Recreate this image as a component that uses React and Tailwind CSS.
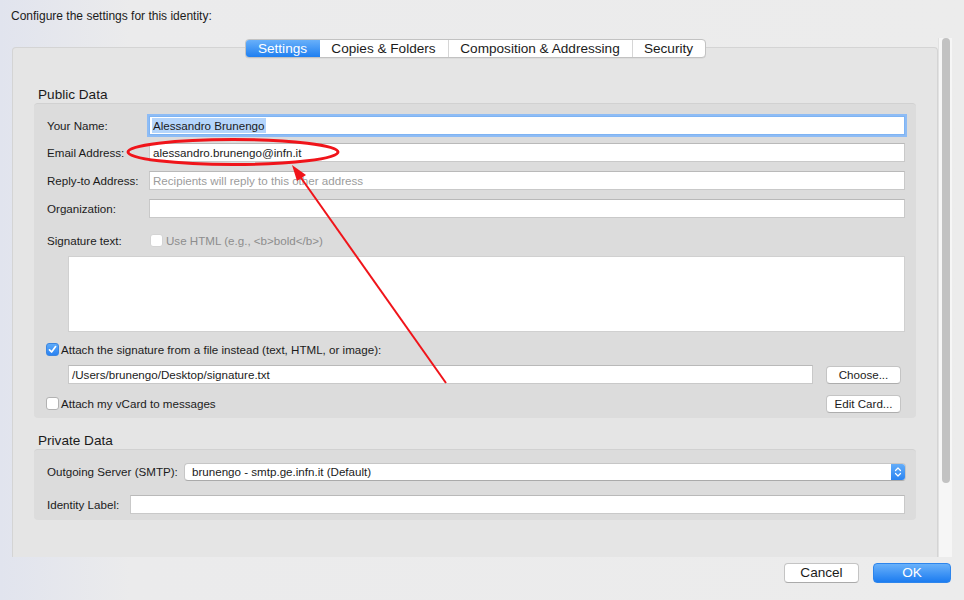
import React from "react";

function Input({ className = "", children, placeholder }) {
  return (
    <div
      className={
        "h-[19px] bg-white border border-[#c9c9c9] border-t-[#b9b9b9] flex items-center pl-[3px] text-[11.6px] leading-[13px] whitespace-nowrap overflow-hidden " +
        className
      }
    >
      {children}
      {placeholder && <span className="text-[#9c9c9c]">{placeholder}</span>}
    </div>
  );
}

function Checkbox({ checked, disabled }) {
  if (checked) {
    return (
      <div className="w-[13px] h-[13px] rounded-[3px] bg-[linear-gradient(#5eaaf8,#2a83f2)] border border-[#3c86e0] flex items-center justify-center shrink-0">
        <svg width="9" height="9" viewBox="0 0 9 9">
          <path d="M1.5 4.8 L3.6 7 L7.6 1.6" fill="none" stroke="white" strokeWidth="1.7" strokeLinecap="round" strokeLinejoin="round" />
        </svg>
      </div>
    );
  }
  return (
    <div
      className={
        "w-[13px] h-[13px] rounded-[3px] bg-white border shrink-0 " +
        (disabled ? "border-[#d4d4d4] bg-[#f4f4f4]" : "border-[#b2b2b2]")
      }
    />
  );
}

function Button({ children, className = "" }) {
  return (
    <div
      className={
        "bg-white border border-[#c4c4c4] border-b-[#adadad] rounded-[4px] flex items-center justify-center text-[11.6px] " +
        className
      }
    >
      {children}
    </div>
  );
}

export default function App() {
  return (
    <div className="relative w-[964px] h-[600px] overflow-hidden bg-[linear-gradient(to_right,#e1e4ee,#ebebec_130px,#ececec)] text-[#1b1b1b] font-['Liberation_Sans',Arial,sans-serif]">
      <div className="h-[38px] pl-[11px] pt-[9px] text-[12px] leading-[14px]">
        Configure the settings for this identity:
      </div>

      <div className="flex h-[519px]">
        <div className="ml-[12px] w-[926px] flex flex-col">
          {/* tabs */}
          <div className="relative z-10 mt-[1px] -mb-[11px] flex justify-center">
            <div className="flex h-[19px] rounded-[4px] border border-[#c2c2c2] bg-white text-[13.6px] leading-[17px] overflow-hidden shadow-[0_0.5px_0.5px_rgba(0,0,0,0.08)]">
              <div className="w-[74px] flex items-center justify-center bg-[linear-gradient(#68b0fa,#1f7ff0)] text-white">Settings</div>
              <div className="w-[128px] flex items-center justify-center">Copies &amp; Folders</div>
              <div className="w-[184px] flex items-center justify-center border-l border-[#d6d6d6]">Composition &amp; Addressing</div>
              <div className="w-[73px] flex items-center justify-center border-l border-[#d6d6d6]">Security</div>
            </div>
          </div>

          {/* box */}
          <div className="h-[510px] border border-[#d4d4d4] border-b-0 rounded-t-[4px] bg-[#e5e5e5] px-[21px] pt-[38px]">
            <div className="pl-[4px] h-[16px] text-[13.6px] leading-[17px] mb-[1px]">Public Data</div>
            <div className="h-[315px] rounded-[4px] bg-[#dcdcdc] border-t border-[#d1d1d1] pl-[13px] pr-[11px] pt-[12px] flex flex-col text-[11.6px]">
              <div className="flex items-center h-[19px]">
                <div className="w-[102px]">Your Name:</div>
                <div className="flex-1 h-[19px] bg-white border border-[#7fb4f3] shadow-[0_0_0_2px_#8ebcf5] flex items-center pl-[2px]">
                  <span className="bg-[#b5d5fb] px-[1px] leading-[15px]">Alessandro Brunengo</span>
                </div>
              </div>
              <div className="flex items-center h-[19px] mt-[8px]">
                <div className="w-[102px]">Email Address:</div>
                <Input className="flex-1">alessandro.brunengo@infn.it</Input>
              </div>
              <div className="flex items-center h-[19px] mt-[9px]">
                <div className="w-[102px]">Reply-to Address:</div>
                <Input className="flex-1" placeholder="Recipients will reply to this other address" />
              </div>
              <div className="flex items-center h-[19px] mt-[9px]">
                <div className="w-[102px]">Organization:</div>
                <Input className="flex-1" />
              </div>
              <div className="flex items-center h-[19px] mt-[13px]">
                <div className="w-[103px]">Signature text:</div>
                <Checkbox disabled />
                <div className="ml-[3px] text-[#8d8d8d]">Use HTML (e.g., &lt;b&gt;bold&lt;/b&gt;)</div>
              </div>
              <div className="ml-[21px] mt-[6px] h-[76px] bg-white border border-[#d0d0d0]" />
              <div className="flex items-center h-[19px] mt-[8px] -ml-[1px]">
                <Checkbox checked />
                <div className="ml-[2px]">Attach the signature from a file instead (text, HTML, or image):</div>
              </div>
              <div className="flex items-center h-[19px] mt-[6px] ml-[21px]">
                <Input className="w-[745px]">/Users/brunengo/Desktop/signature.txt</Input>
                <Button className="ml-[13px] w-[75px] h-[18px]">Choose...</Button>
              </div>
              <div className="flex items-center h-[19px] mt-[10px] -ml-[1px]">
                <Checkbox />
                <div className="ml-[2px]">Attach my vCard to messages</div>
                <Button className="ml-auto mr-[4px] w-[75px] h-[18px]">Edit Card...</Button>
              </div>
            </div>

            <div className="pl-[4px] h-[16px] text-[13.6px] leading-[17px] mt-[14px] mb-[1px]">Private Data</div>
            <div className="h-[71px] rounded-[4px] bg-[#dcdcdc] border-t border-[#d1d1d1] pl-[13px] pr-[11px] pt-[12px] flex flex-col text-[11.6px]">
              <div className="flex items-center h-[19px]">
                <div className="w-[137px]">Outgoing Server (SMTP):</div>
                <div className="flex-1 h-[18px] mr-[-1px] bg-white border border-[#c6c6c6] border-b-[#aaaaaa] rounded-[4px] flex items-center overflow-hidden">
                  <div className="flex-1 pl-[7px]">brunengo - smtp.ge.infn.it (Default)</div>
                  <div className="w-[14px] h-full bg-[linear-gradient(#64adf9,#2a84f2)] flex items-center justify-center">
                    <svg width="8" height="12" viewBox="0 0 8 12">
                      <path d="M1.5 4.5 L4 2 L6.5 4.5 M1.5 7.5 L4 10 L6.5 7.5" fill="none" stroke="white" strokeWidth="1.2" strokeLinecap="round" strokeLinejoin="round" />
                    </svg>
                  </div>
                </div>
              </div>
              <div className="flex items-center h-[19px] mt-[14px]">
                <div className="w-[83px]">Identity Label:</div>
                <Input className="flex-1" />
              </div>
            </div>
          </div>
        </div>

        {/* scroller */}
        <div className="w-[14px] bg-[#f6f6f6] border-l border-[#e2e2e2] pl-[3px]">
          <div className="w-[8px] h-[445px] rounded-full bg-[#c2c2c2]" />
        </div>
      </div>

      {/* bottom buttons */}
      <div className="flex justify-end pr-[13px] pt-[6px] gap-[14px]">
        <div className="w-[75px] h-[20px] bg-white border border-[#c4c4c4] border-b-[#aaaaaa] rounded-[4px] flex items-center justify-center text-[13.6px]">Cancel</div>
        <div className="w-[78px] h-[20px] rounded-[4px] bg-[linear-gradient(#69b1fa,#1c7cf0)] border border-[#2d85ec] flex items-center justify-center text-[13.6px] text-white">OK</div>
      </div>

      {/* annotation */}
      <svg className="absolute left-0 top-0 pointer-events-none" width="964" height="600">
        <ellipse cx="233" cy="152" rx="105" ry="12.5" fill="none" stroke="#f0141a" strokeWidth="3" />
        <line x1="446" y1="383" x2="299" y2="175" stroke="#f0141a" strokeWidth="2" />
        <polygon points="292,165 297,181 306,175" fill="#f0141a" />
      </svg>
    </div>
  );
}
